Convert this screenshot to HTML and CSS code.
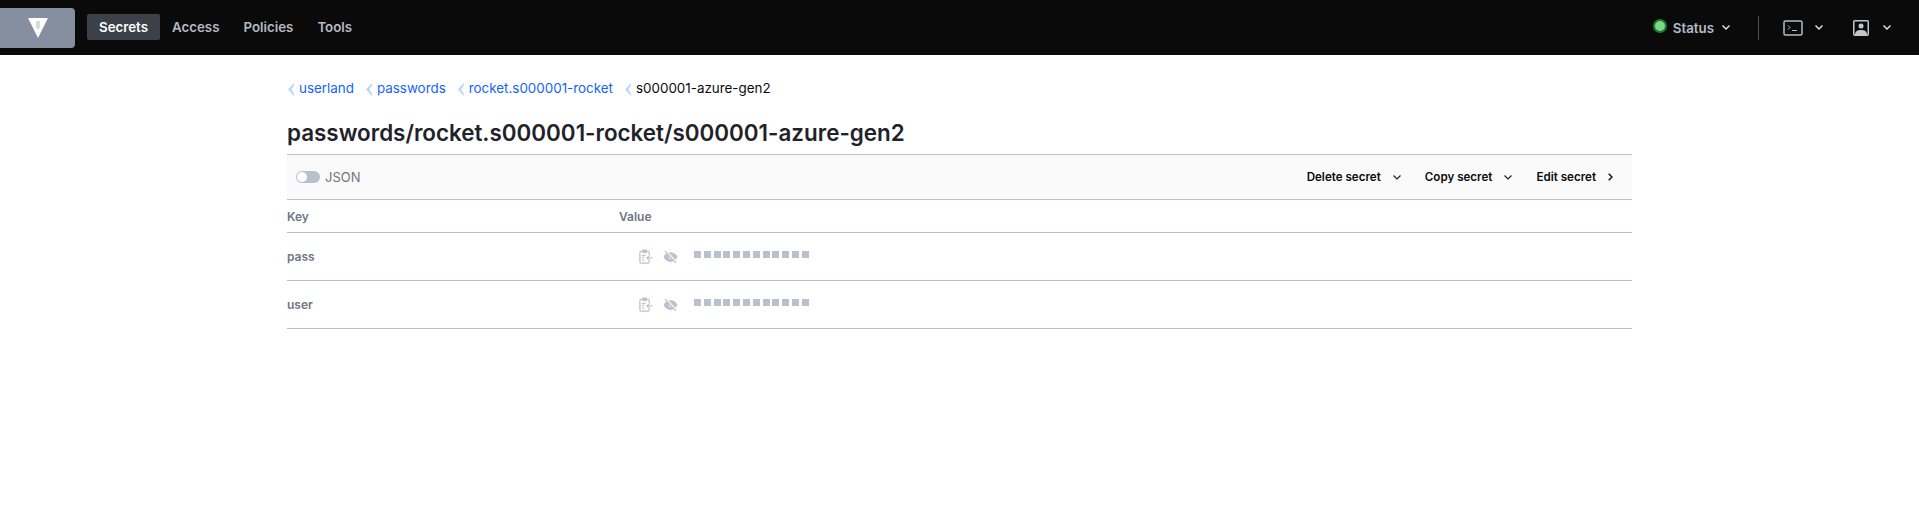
FILE: index.html
```html
<!DOCTYPE html>
<html lang="en">
<head>
    <meta charset="UTF-8">
    <meta name="viewport" content="width=device-width, initial-scale=1.0">
    <title>s000001-azure-gen2 - Secrets</title>
    <link rel="stylesheet" href="styles.css">
</head>
<body>
    <header class="topbar">
        <a class="logo" href="#">
            <svg width="20" height="20" viewBox="0 0 20 20"><path d="M0 0H20L10 20Z" fill="#fff"/><path d="M8 4h4M8 6h4M8 8h4M8.500 10h3" stroke="#aeb5c0" stroke-width="1"/></svg>
        </a>
        <nav class="mainnav">
            <a class="navlink active" href="#">Secrets</a>
            <a class="navlink" href="#">Access</a>
            <a class="navlink" href="#">Policies</a>
            <a class="navlink" href="#">Tools</a>
        </nav>
        <div class="topright">
            <div class="status">
                <span class="dot"></span>
                <span class="status-text">Status</span>
                <svg class="chev" width="8" height="5" viewBox="0 0 8 5"><path d="M0.500 0.500L4 4 7.500 0.500" fill="none" stroke="#e4e6ea" stroke-width="1.4"/></svg>
            </div>
            <span class="divider"></span>
            <div class="iconmenu console">
                <svg width="20" height="16" viewBox="0 0 20 16"><rect x="1" y="1" width="18" height="14" rx="1.500" fill="none" stroke="#b6bac2" stroke-width="1.500"/><path d="M5 5.500l2 2-2 2M9 10.500h5" fill="none" stroke="#b6bac2" stroke-width="1"/></svg>
                <svg class="chev" width="8" height="5" viewBox="0 0 8 5"><path d="M0.500 0.500L4 4 7.500 0.500" fill="none" stroke="#e4e6ea" stroke-width="1.4"/></svg>
            </div>
            <div class="iconmenu user">
                <svg width="16" height="16" viewBox="0 0 16 16"><rect x="0.750" y="0.750" width="14.500" height="14.500" rx="1" fill="none" stroke="#c2c5cb" stroke-width="1.500"/><circle cx="8" cy="6" r="2.500" fill="#c2c5cb"/><path d="M2 15c0-4 2.500-5 6-5s6 1 6 5z" fill="#c2c5cb"/></svg>
                <svg class="chev" width="8" height="5" viewBox="0 0 8 5"><path d="M0.500 0.500L4 4 7.500 0.500" fill="none" stroke="#e4e6ea" stroke-width="1.4"/></svg>
            </div>
        </div>
    </header>

    <main class="content">
        <ul class="breadcrumb">
            <li><span class="sep"></span><a href="#">userland</a></li>
            <li><span class="sep"></span><a href="#">passwords</a></li>
            <li><span class="sep"></span><a href="#">rocket.s000001-rocket</a></li>
            <li><span class="sep"></span><span class="current">s000001-azure-gen2</span></li>
        </ul>

        <h1 class="title">passwords/rocket.s000001-rocket/s000001-azure-gen2</h1>

        <div class="toolbar">
            <div class="toggle-wrap">
                <span class="toggle"><span class="knob"></span></span>
                <span class="toggle-label">JSON</span>
            </div>
            <div class="actions">
                <a class="action" href="#">Delete secret
                    <svg width="8" height="5" viewBox="0 0 8 5"><path d="M0.500 0.500L4 4 7.500 0.500" fill="none" stroke="#222" stroke-width="1.2"/></svg>
                </a>
                <a class="action" href="#">Copy secret
                    <svg width="8" height="5" viewBox="0 0 8 5"><path d="M0.500 0.500L4 4 7.500 0.500" fill="none" stroke="#222" stroke-width="1.2"/></svg>
                </a>
                <a class="action" href="#">Edit secret
                    <svg width="5" height="8" viewBox="0 0 5 8"><path d="M0.700 0.700L4 4 0.700 7.300" fill="none" stroke="#111" stroke-width="1.500"/></svg>
                </a>
            </div>
        </div>

        <div class="row head">
            <div class="col-key">Key</div>
            <div class="col-value">Value</div>
        </div>
        <div class="row">
            <div class="col-key">pass</div>
            <div class="col-value">
                <svg class="ico" width="14" height="15" viewBox="0 0 15 16"><use href="#clip"/></svg>
                <svg class="ico eye" width="15" height="14" viewBox="0 0 16 14"><use href="#eye"/></svg>
                <span class="masked"></span>
            </div>
        </div>
        <div class="row">
            <div class="col-key">user</div>
            <div class="col-value">
                <svg class="ico" width="14" height="15" viewBox="0 0 15 16"><use href="#clip"/></svg>
                <svg class="ico eye" width="15" height="14" viewBox="0 0 16 14"><use href="#eye"/></svg>
                <span class="masked"></span>
            </div>
        </div>
    </main>

    <svg class="defs" width="0" height="0">
        <symbol id="clip" viewBox="0 0 15 16">
            <path d="M4 2.500H2a1 1 0 0 0-1 1V14a1 1 0 0 0 1 1h8a1 1 0 0 0 1-1v-2.500M11 7V3.500a1 1 0 0 0-1-1H8" fill="none" stroke="#bcc2cd" stroke-width="1.300"/>
            <rect x="4" y="1" width="4" height="3" fill="#bcc2cd" stroke="#bcc2cd" stroke-width="1"/>
            <path d="M3 7h4M3 9.500h2.500M3 12h3M14.500 9.500H8.500M10.500 7.500l-2 2 2 2" fill="none" stroke="#bcc2cd" stroke-width="1.300"/>
        </symbol>
        <symbol id="eye" viewBox="0 0 16 14">
            <path d="M0.500 7C2.500 3.200 5 1.800 8 1.800s5.500 1.400 7.500 5.200c-2 3.800-4.500 5.200-7.500 5.200S2.500 10.800 0.500 7z" fill="#bcc2cd"/>
            <circle cx="8" cy="7" r="2" fill="#e6e9ee"/>
            <path d="M3 0.500L15 13.500" stroke="#fff" stroke-width="2"/>
            <path d="M2 0.500L14 13.500" stroke="#bcc2cd" stroke-width="1.300"/>
        </symbol>
    </svg>
</body>
</html>
```

FILE: styles.css
```css
* {
    box-sizing: border-box;
}
body {
    margin: 0;
    background: #fff;
    font-family: Inter, "Noto Sans", sans-serif;
    color: #1f2329;
}
a {
    text-decoration: none;
    color: inherit;
}
.defs {
    display: block;
}
.topbar {
    display: flex;
    align-items: center;
    height: 55px;
    background: #0a0a0a;
}
.logo {
    display: flex;
    align-items: center;
    justify-content: center;
    width: 75px;
    height: 40px;
    background: #858f9f;
    border-radius: 0 4px 4px 0;
}
.mainnav {
    display: flex;
    align-items: center;
    margin-left: 12px;
    margin-bottom: 1px;
}
.navlink {
    padding: 0 12px;
    height: 26px;
    line-height: 26px;
    font-size: 13.3px;
    font-weight: 600;
    color: #b4bac4;
    border-radius: 2px;
}
.navlink.active {
    background: #3b4049;
    color: #fff;
}
.topright {
    display: flex;
    align-items: center;
    margin-left: auto;
    padding-right: 28px;
}
.status {
    display: flex;
    align-items: center;
}
.dot {
    width: 14px;
    height: 14px;
    margin-bottom: 4px;
    border-radius: 50%;
    background: #7fd583;
    border: 2px solid #1f7a2d;
}
.status-text {
    margin: 0 8px 0 6px;
    font-size: 13.3px;
    font-weight: 600;
    color: #b4bac4;
}
.divider {
    width: 1px;
    height: 24px;
    margin: 0 24px 0 28px;
    background: #4a4e56;
}
.iconmenu {
    display: flex;
    align-items: center;
    gap: 12px;
}
.iconmenu.user {
    margin-left: 30px;
    gap: 14px;
}
.content {
    width: 1345px;
    margin-left: 287px;
}
.breadcrumb {
    display: flex;
    list-style: none;
    margin: 0;
    padding: 25px 0 0;
    font-size: 13.4px;
    line-height: 17px;
}
.breadcrumb li {
    display: flex;
    align-items: center;
    margin-right: 11px;
}
.breadcrumb a {
    color: #1563ff;
}
.breadcrumb .current {
    color: #0a0a0a;
}
.sep {
    width: 6px;
    height: 13px;
    margin: 2px 5px 0 1px;
    background: #bfd4ff;
    clip-path: polygon(100% 0, 0 50%, 100% 100%, 100% 78%, 55% 50%, 100% 22%);
}
.title {
    margin: 21px 0 0;
    font-size: 22.4px;
    line-height: 30px;
    font-weight: 600;
    color: #1f2329;
}
.toolbar {
    display: flex;
    align-items: center;
    justify-content: space-between;
    height: 46px;
    margin-top: 6px;
    padding: 0 19px 0 9px;
    background: #fafafa;
    border-top: 1px solid #bac1cc;
    border-bottom: 1px solid #bac1cc;
}
.toggle-wrap {
    display: flex;
    align-items: center;
}
.toggle {
    display: block;
    position: relative;
    width: 24px;
    height: 12px;
    margin-bottom: 1px;
    border-radius: 6px;
    background: #bac1cc;
}
.knob {
    position: absolute;
    left: 1px;
    top: 1px;
    width: 10px;
    height: 10px;
    border-radius: 50%;
    background: #fff;
}
.toggle-label {
    margin-left: 5px;
    font-size: 13px;
    color: #6f7682;
}
.actions {
    display: flex;
    align-items: center;
    gap: 24px;
}
.action {
    display: flex;
    align-items: center;
    gap: 12px;
    font-size: 11.6px;
    font-weight: 600;
    color: #0a0a0a;
}
.row {
    display: flex;
    align-items: center;
    height: 48px;
    border-bottom: 1px solid #bac1cc;
    font-size: 12px;
    font-weight: 600;
    color: #6f7682;
}
.row.head {
    height: 33px;
}
.col-key {
    width: 332px;
}
.col-value {
    display: flex;
    align-items: center;
}
.ico {
    margin-left: 20px;
}
.ico.eye {
    margin-left: 10px;
}
.masked {
    display: block;
    width: 115px;
    height: 7px;
    margin: 0 0 5px 16px;
    background: repeating-linear-gradient(90deg, #bac1cc 0, #bac1cc 7px, transparent 7px, transparent 9.8px);
}
```
